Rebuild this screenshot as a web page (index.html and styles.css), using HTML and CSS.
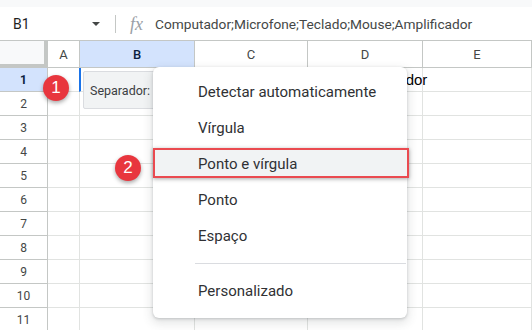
FILE: index.html
```html
<!DOCTYPE html>
<html lang="pt">
<head>
    <meta charset="UTF-8">
    <title>Planilha</title>
    <link rel="stylesheet" href="styles.css">
</head>
<body>
    <div class="topband"></div>

    <div class="formula-bar">
        <div class="name-box">
            <span>B1</span>
            <svg class="caret" width="8" height="4" viewBox="0 0 8 4"><path d="M0 0h8L4 4z" fill="#444746"/></svg>
        </div>
        <div class="fb-sep"></div>
        <span class="fx">fx</span>
        <span class="formula">Computador;Microfone;Teclado;Mouse;Amplificador</span>
    </div>

    <div class="sheet">
        <div class="corner"></div>
        <div class="col-head">A</div>
        <div class="col-head sel">B</div>
        <div class="col-head">C</div>
        <div class="col-head">D</div>
        <div class="col-head">E</div>

        <div class="row-head sel">1</div>
        <div class="cell"></div>
        <div class="cell active"><span class="cell-text">Computador;Microfone;Teclado;Mouse;Amplificador</span></div>
        <div class="cell"></div><div class="cell"></div><div class="cell"></div>

        <div class="row-head">2</div>
        <div class="cell"></div><div class="cell"></div><div class="cell"></div><div class="cell"></div><div class="cell"></div>
        <div class="row-head">3</div>
        <div class="cell"></div><div class="cell"></div><div class="cell"></div><div class="cell"></div><div class="cell"></div>
        <div class="row-head">4</div>
        <div class="cell"></div><div class="cell"></div><div class="cell"></div><div class="cell"></div><div class="cell"></div>
        <div class="row-head">5</div>
        <div class="cell"></div><div class="cell"></div><div class="cell"></div><div class="cell"></div><div class="cell"></div>
        <div class="row-head">6</div>
        <div class="cell"></div><div class="cell"></div><div class="cell"></div><div class="cell"></div><div class="cell"></div>
        <div class="row-head">7</div>
        <div class="cell"></div><div class="cell"></div><div class="cell"></div><div class="cell"></div><div class="cell"></div>
        <div class="row-head">8</div>
        <div class="cell"></div><div class="cell"></div><div class="cell"></div><div class="cell"></div><div class="cell"></div>
        <div class="row-head">9</div>
        <div class="cell"></div><div class="cell"></div><div class="cell"></div><div class="cell"></div><div class="cell"></div>
        <div class="row-head">10</div>
        <div class="cell"></div><div class="cell"></div><div class="cell"></div><div class="cell"></div><div class="cell"></div>
        <div class="row-head">11</div>
        <div class="cell"></div><div class="cell"></div><div class="cell"></div><div class="cell"></div><div class="cell"></div>
    </div>

    <!-- chip de colar/dividir -->
    <div class="split-chip">Separador:</div>

    <div class="menu">
        <div class="menu-item">Detectar automaticamente</div>
        <div class="menu-item">Vírgula</div>
        <div class="menu-item current">Ponto e vírgula</div>
        <div class="menu-item">Ponto</div>
        <div class="menu-item">Espaço</div>
        <div class="menu-divider"></div>
        <div class="menu-item">Personalizado</div>
    </div>

    <span class="badge badge-1">1</span>
    <span class="badge badge-2">2</span>
</body>
</html>
```

FILE: styles.css
```css
* {
    margin: 0;
    padding: 0;
    box-sizing: border-box;
}

body {
    width: 532px;
    height: 330px;
    overflow: hidden;
    position: relative;
    background: #fff;
    font-family: Roboto, "Liberation Sans", sans-serif;
    color: #1f1f1f;
}

.topband {
    height: 7px;
    background: #f8f9fa;
}

/* Barra de fórmulas */
.formula-bar {
    height: 34px;
    display: flex;
    align-items: center;
    border-bottom: 1px solid #c4c7c5;
    background: #fff;
}

.name-box {
    width: 115px;
    padding-left: 13px;
    padding-right: 15px;
    display: flex;
    align-items: center;
    justify-content: space-between;
    font-size: 14px;
    color: #1f1f1f;
}

.caret {
    display: block;
}

.fb-sep {
    width: 1px;
    height: 18px;
    background: #c4c7c5;
}

.fx {
    margin-left: 14px;
    width: 25px;
    font-family: "Liberation Serif", serif;
    font-style: italic;
    font-size: 18px;
    color: #9aa0a6;
    line-height: 1;
}

.formula {
    font-size: 13.7px;
    color: #444746;
    white-space: nowrap;
}

/* Grade */
.sheet {
    display: grid;
    grid-template-columns: 48px 32px 115px 113px 115px 1fr;
    grid-template-rows: 27px repeat(11, 24px);
}

.corner {
    background: #f8f9fa;
    border-right: 4px solid #c4c7c5;
    border-bottom: 4px solid #c4c7c5;
}

.col-head {
    display: flex;
    align-items: center;
    justify-content: center;
    font-size: 13px;
    color: #444746;
    border-right: 1px solid #c4c7c5;
    border-bottom: 1px solid #c4c7c5;
}

.col-head.sel {
    background: #d3e3fd;
    color: #0b1f3f;
    font-weight: 500;
}

.row-head {
    display: flex;
    align-items: center;
    justify-content: center;
    font-size: 12px;
    color: #444746;
    border-right: 1px solid #c4c7c5;
    border-bottom: 1px solid #c4c7c5;
}

.row-head.sel {
    background: #d3e3fd;
    color: #0b1f3f;
    font-weight: 700;
}

.cell {
    border-right: 1px solid #e1e3e1;
    border-bottom: 1px solid #e1e3e1;
    position: relative;
}

.cell.active {
    border-left: 2px solid #1a73e8;
    margin-left: -1px;
}

.cell-text {
    display: block;
    white-space: nowrap;
    font-family: "Liberation Sans", Arial, sans-serif;
    font-size: 15px;
    color: #000;
    padding: 3px 0 0 2px;
}

/* Chip "Separador" */
.split-chip {
    position: absolute;
    left: 83px;
    top: 71px;
    width: 90px;
    height: 38px;
    padding-left: 6px;
    display: flex;
    align-items: center;
    background: #f1f3f4;
    border: 1px solid #dadce0;
    border-radius: 2px;
    font-size: 12.5px;
    color: #3c4043;
}

/* Menu */
.menu {
    position: absolute;
    left: 153px;
    top: 67px;
    width: 254px;
    height: 251px;
    padding-top: 7px;
    background: #fff;
    border-radius: 6px;
    box-shadow: 0 1px 3px rgba(60, 64, 67, 0.25), 0 4px 10px 2px rgba(60, 64, 67, 0.12);
}

.menu-item {
    height: 36px;
    display: flex;
    align-items: center;
    padding-left: 45px;
    font-size: 15px;
    color: #303134;
    position: relative;
}

.menu-item.current {
    isolation: isolate;
}

.menu-item.current::before {
    content: "";
    position: absolute;
    z-index: -1;
    left: 0;
    right: -2px;
    top: 2px;
    bottom: 4px;
    background: #f1f3f4;
    border: 2px solid #ea4a50;
    box-shadow: 0 1px 4px rgba(0, 0, 0, 0.35);
}

.menu-divider {
    height: 1px;
    background: #dadce0;
    margin: 9px 1px 9px 42px;
}

/* Marcadores */
.badge {
    position: absolute;
    width: 26px;
    height: 26px;
    border-radius: 50%;
    background: #e8363e;
    color: #fff;
    font-family: "Liberation Sans", Arial, sans-serif;
    font-size: 17px;
    display: flex;
    align-items: center;
    justify-content: center;
    box-shadow: 0 2px 4px rgba(0, 0, 0, 0.35);
}

.badge-1 {
    left: 43px;
    top: 75px;
}

.badge-2 {
    left: 115px;
    top: 155px;
}
```
